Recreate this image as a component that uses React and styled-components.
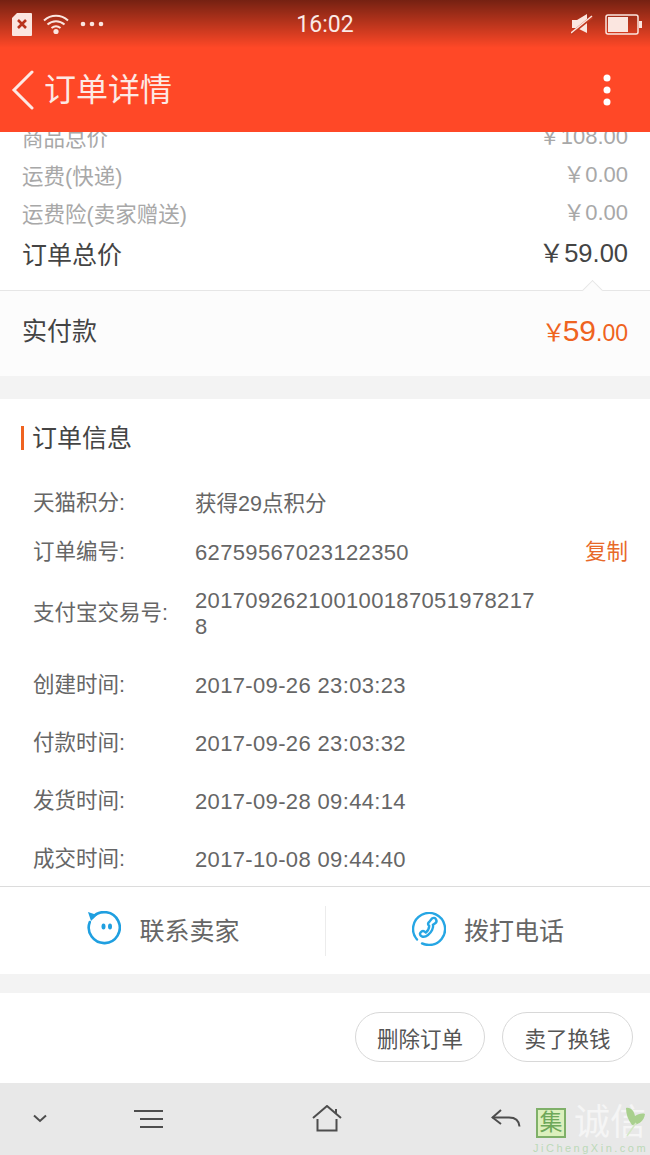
import styled, { createGlobalStyle } from "styled-components"

const GlobalStyle = createGlobalStyle`
    html, body {
        margin: 0;
        padding: 0;
        background: #fff;
    }
    * {
        box-sizing: border-box;
    }
`

const FONT = `"Liberation Sans", "Noto Sans CJK SC", sans-serif`

const Page = styled.div`
    width: 650px;
    height: 1155px;
    display: flex;
    flex-direction: column;
    overflow: hidden;
    font-family: ${FONT};
    background: #f3f3f3;
`

const Header = styled.header`
    height: 132px;
    flex: none;
    background: #ff4827;
    position: relative;
    display: flex;
    flex-direction: column;
    color: #fff;
    z-index: 1;
`

const StatusShade = styled.div`
    position: absolute;
    top: 0;
    left: 0;
    right: 0;
    height: 48px;
    background: linear-gradient(rgba(0, 0, 0, 0.54), rgba(0, 0, 0, 0));
`

const StatusBar = styled.div`
    position: relative;
    height: 48px;
    display: grid;
    grid-template-columns: 1fr auto 1fr;
    align-items: center;
    padding: 0 8px;
`

const StatusLeft = styled.div`
    display: flex;
    align-items: center;
    gap: 11px;
    padding-left: 4px;
`

const StatusRight = styled.div`
    display: flex;
    align-items: center;
    justify-content: flex-end;
    gap: 12px;
`

const Clock = styled.span`
    font-family: Roboto, ${FONT};
    font-size: 23px;
    color: #fbeae6;
`

const TitleBar = styled.div`
    flex: 1;
    display: flex;
    align-items: center;
    padding: 0 39px 0 11px;
    gap: 9px;
`

const Title = styled.h1`
    flex: 1;
    margin: 0;
    font-size: 32px;
    font-weight: 400;
    color: #fde9e4;
    line-height: 1;
`

const Content = styled.main`
    flex: 1;
    display: flex;
    flex-direction: column;
    overflow: hidden;
`

const PriceList = styled.section`
    margin-top: -25px;
    height: 183px;
    background: #fff;
    padding: 10px 22px 0;
    flex: none;
`

const PriceRow = styled.div`
    height: 38px;
    display: flex;
    justify-content: space-between;
    align-items: center;
    font-size: 21.5px;
    color: #a8a8a8;
`

const PriceValue = styled.span`
    font-size: 22px;
    padding-bottom: 4px;
`

const TotalRow = styled(PriceRow)`
    height: 44px;
    font-size: 25px;
    color: #444;
`

const TotalValue = styled.span`
    font-size: 25.5px;
    padding-bottom: 5px;
`

const PaySection = styled.section`
    position: relative;
    height: 86px;
    flex: none;
    background: #fcfcfc;
    border-top: 1px solid #e6e6e6;
    display: flex;
    justify-content: space-between;
    align-items: center;
    padding: 0 22px 10px;
    font-size: 25px;
    color: #444;
`

const Notch = styled.span`
    position: absolute;
    right: 50px;
    top: -8px;
    width: 15px;
    height: 15px;
    background: #fcfcfc;
    border-top: 1px solid #e6e6e6;
    border-left: 1px solid #e6e6e6;
    transform: rotate(45deg);
`

const PayAmount = styled.span`
    color: #ef6320;
    font-size: 23px;
    display: flex;
    align-items: baseline;
    padding-top: 4px;
`

const PayYen = styled.span`
    font-size: 24px;
    margin-right: -3px;
`

const PayBig = styled.b`
    font-weight: 400;
    font-size: 30px;
`

const Gap = styled.div`
    height: ${(p) => p.$h}px;
    flex: none;
`

const InfoSection = styled.section`
    height: 487px;
    flex: none;
    background: #fff;
    padding-top: 19px;
`

const SectionTitle = styled.h2`
    margin: 0 0 22px 21px;
    padding-left: 11px;
    height: 36px;
    display: flex;
    align-items: center;
    font-size: 25px;
    font-weight: 400;
    color: #444;
    position: relative;

    &::before {
        content: "";
        position: absolute;
        left: 0;
        top: 8px;
        width: 3px;
        height: 24px;
        background: #ef6320;
    }
`

const InfoRow = styled.div`
    height: ${(p) => p.$h}px;
    margin-bottom: ${(p) => p.$after || 0}px;
    display: grid;
    grid-template-columns: 162px 345px 1fr;
    align-items: center;
    padding: 0 22px 0 33px;
    font-size: 21.5px;
    color: #666;
`

const InfoValue = styled.span`
    font-size: ${(p) => (p.$text ? 21.5 : 22)}px;
    line-height: 26px;
    padding-top: 7px;
    word-break: break-all;
    letter-spacing: ${(p) => (p.$text ? 0 : 0.35)}px;
`

const CopyLink = styled.span`
    justify-self: end;
    color: #e8692a;
`

const ContactBar = styled.section`
    height: 88px;
    flex: none;
    background: #fff;
    border-top: 1px solid #dcdcdc;
    display: grid;
    grid-template-columns: 1fr 1fr;
    align-items: center;
`

const ContactButton = styled.div`
    height: 50px;
    display: flex;
    align-items: center;
    justify-content: center;
    gap: 18px;
    font-size: 25px;
    color: #666;
    padding-bottom: 3px;
    border-left: ${(p) => (p.$divided ? "1px solid #ececec" : "none")};
`

const ActionBar = styled.section`
    height: 90px;
    flex: none;
    background: #fff;
    display: flex;
    justify-content: flex-end;
    align-items: center;
    gap: 17px;
    padding: 0 17px 2px 0;
`

const PillButton = styled.div`
    width: ${(p) => p.$w}px;
    height: 50px;
    border: 1px solid #d8d8d8;
    border-radius: 25px;
    display: flex;
    align-items: center;
    justify-content: center;
    font-size: 21.5px;
    color: #555;
`

const NavBar = styled.nav`
    height: 72px;
    flex: none;
    background: #e8e8e8;
    position: relative;
    display: grid;
    grid-template-columns: 80px 138px 218px 140px;
    align-items: center;
    padding-bottom: 1px;
`

const NavSlot = styled.div`
    display: flex;
    justify-content: center;
`

const Watermark = styled.div`
    position: absolute;
    left: 533px;
    top: 23px;
    width: 117px;
    display: flex;
    flex-direction: column;
`

const MarkRow = styled.div`
    display: flex;
    align-items: center;
    gap: 8px;
    position: relative;
`

const MarkBox = styled.span`
    width: 30px;
    height: 30px;
    margin-left: 3px;
    flex: none;
    background: #dcf0bd;
    border: 2px solid #7fb069;
    color: #6ea85a;
    font-size: 23px;
    line-height: 25px;
    text-align: center;
`

const MarkText = styled.span`
    font-size: 36px;
    line-height: 34px;
    color: #f5f5f5;
    white-space: nowrap;
`

const MarkLeaf = styled.svg`
    position: absolute;
    left: 90px;
    top: 0;
`

const MarkLatin = styled.span`
    font-size: 11px;
    letter-spacing: 2.5px;
    color: #bcd9b8;
    white-space: nowrap;
    margin-top: 2px;
`

const SimIcon = () => (
    <svg width="20" height="23" viewBox="0 0 20 23">
        <path d="M5 0h14a1 1 0 0 1 1 1v21a1 1 0 0 1-1 1H1a1 1 0 0 1-1-1V5z" fill="#fbe6e0" />
        <path d="M6 7l8 8M14 7l-8 8" stroke="#b8341c" strokeWidth="2.6" />
    </svg>
)

const WifiIcon = () => (
    <svg width="26" height="22" viewBox="0 0 26 22" fill="none" stroke="#fbe6e0" strokeWidth="2">
        <path d="M1 7.5C8 1.2 18 1.2 25 7.5" />
        <path d="M4.5 11.5c5-4.4 12-4.400 17 0" />
        <path d="M8.5 15c2.800-2.200 6.200-2.200 9 0" />
        <circle cx="13" cy="18.500" r="2.600" fill="#fbe6e0" stroke="none" />
    </svg>
)

const MoreDots = () => (
    <svg width="24" height="6" viewBox="0 0 24 6" fill="#fbe6e0">
        <circle cx="3" cy="3" r="2.300" />
        <circle cx="12" cy="3" r="2.300" />
        <circle cx="21" cy="3" r="2.300" />
    </svg>
)

const MuteIcon = () => (
    <svg width="22" height="22" viewBox="0 0 22 22" fill="none">
        <path d="M1 7h5l10-6v19L6 15H1z" fill="#fbe6e0" />
        <path d="M0 21L21 4" stroke="#c53c22" strokeWidth="3" />
        <path d="M0 20L21 3" stroke="#fbe6e0" strokeWidth="1.400" />
    </svg>
)

const BatteryIcon = () => (
    <svg width="37" height="21" viewBox="0 0 37 21">
        <rect x="1" y="1" width="32" height="19" rx="2" fill="none" stroke="#fbe6e0" strokeWidth="1.500" />
        <rect x="3" y="3" width="20" height="15" fill="#fbe6e0" />
        <rect x="34" y="7" width="3" height="7" fill="#fbe6e0" />
    </svg>
)

const BackIcon = () => (
    <svg width="24" height="40" viewBox="0 0 24 40" fill="none" stroke="#fde9e4" strokeWidth="3" strokeLinecap="round">
        <path d="M21 2L3 20l18 18" />
    </svg>
)

const KebabIcon = () => (
    <svg width="8" height="32" viewBox="0 0 8 32" fill="#fff">
        <circle cx="4" cy="4" r="3.500" />
        <circle cx="4" cy="16" r="3.500" />
        <circle cx="4" cy="28" r="3.500" />
    </svg>
)

const ChatIcon = () => (
    <svg width="36" height="36" viewBox="-1 0 36 36" fill="none" stroke="#1f9fe0" strokeWidth="2.600">
        <path d="M6.500 6.500A15.500 15.500 0 1 1 3.800 11" strokeLinecap="round" />
        <path d="M2 1l9 3-6 6z" fill="#1f9fe0" stroke="none" />
        <ellipse cx="17.500" cy="15.500" rx="2" ry="3" fill="#1f9fe0" stroke="none" />
        <ellipse cx="24" cy="15.500" rx="2" ry="3" fill="#1f9fe0" stroke="none" />
    </svg>
)

const PhoneIcon = () => (
    <svg width="34" height="34" viewBox="0 0 34 34" fill="none" stroke="#26a6e4" strokeWidth="2.400" strokeLinecap="round">
        <path d="M5 27.500A16 16 0 1 1 17 33a16 16 0 0 1-7-1.600" />
        <path d="M20 6.500c1.500-1 3-.8 4 .8 1 1.700.6 3-.8 4l-2.200 1.500c.8 3-1.500 7.500-5 10.200-2 1.600-4.200 2.300-6.200 1.400-1.500-.7-2.500-2.300-1.400-3.700 1-1.200 2.700-2 4-1.100l1.400.9c2-1.500 3.300-4.200 3.400-6.500l-.8-1c-.8-1.400 0-2.600 1.200-3.500z" />
    </svg>
)

const ChevronIcon = () => (
    <svg width="14" height="9" viewBox="0 0 14 9" fill="none" stroke="#4d4d4d" strokeWidth="2">
        <path d="M1 1.500l6 5.500 6-5.500" />
    </svg>
)

const MenuIcon = () => (
    <svg width="30" height="20" viewBox="0 0 30 20" fill="none" stroke="#4d4d4d" strokeWidth="2">
        <path d="M0 2h29M6 10h23M6 18h23" />
    </svg>
)

const HomeIcon = () => (
    <svg width="30" height="27" viewBox="0 0 30 27" fill="none" stroke="#4d4d4d" strokeWidth="2">
        <path d="M1 13L15 1l14 12" />
        <path d="M5.500 14v11.500h19V14" />
        <path d="M24 4v5" />
    </svg>
)

const ReturnIcon = () => (
    <svg width="30" height="20" viewBox="0 0 30 20" fill="none" stroke="#4d4d4d" strokeWidth="2">
        <path d="M10 1L1.500 8.500 10 15" />
        <path d="M1.500 8.500H18c6 0 10 3 10.500 9" />
    </svg>
)

const prices = [
    { label: "商品总价", value: "￥108.00" },
    { label: "运费(快递)", value: "￥0.00" },
    { label: "运费险(卖家赠送)", value: "￥0.00" },
]

const infos = [
    { label: "天猫积分:", value: "获得29点积分", h: 49, text: true },
    { label: "订单编号:", value: "62759567023122350", h: 49, copy: true },
    { label: "支付宝交易号:", value: "2017092621001001870519782178", h: 73, after: 6 },
    { label: "创建时间:", value: "2017-09-26 23:03:23", h: 58 },
    { label: "付款时间:", value: "2017-09-26 23:03:32", h: 58 },
    { label: "发货时间:", value: "2017-09-28 09:44:14", h: 58 },
    { label: "成交时间:", value: "2017-10-08 09:44:40", h: 58 },
]

const App = () => (
    <Page>
        <GlobalStyle />
        <Header>
            <StatusShade />
            <StatusBar>
                <StatusLeft>
                    <SimIcon />
                    <WifiIcon />
                    <MoreDots />
                </StatusLeft>
                <Clock>16:02</Clock>
                <StatusRight>
                    <MuteIcon />
                    <BatteryIcon />
                </StatusRight>
            </StatusBar>
            <TitleBar>
                <BackIcon />
                <Title>订单详情</Title>
                <KebabIcon />
            </TitleBar>
        </Header>
        <Content>
            <PriceList>
                {prices.map((p) => (
                    <PriceRow key={p.label}>
                        <span>{p.label}</span>
                        <PriceValue>{p.value}</PriceValue>
                    </PriceRow>
                ))}
                <TotalRow>
                    <span>订单总价</span>
                    <TotalValue>￥59.00</TotalValue>
                </TotalRow>
            </PriceList>
            <PaySection>
                <Notch />
                <span>实付款</span>
                <PayAmount>
                    <PayYen>￥</PayYen>
                    <PayBig>59</PayBig>.00
                </PayAmount>
            </PaySection>
            <Gap $h={23} />
            <InfoSection>
                <SectionTitle>订单信息</SectionTitle>
                {infos.map((i) => (
                    <InfoRow key={i.label} $h={i.h} $after={i.after}>
                        <span>{i.label}</span>
                        <InfoValue $text={i.text}>{i.value}</InfoValue>
                        {i.copy && <CopyLink>复制</CopyLink>}
                    </InfoRow>
                ))}
            </InfoSection>
            <ContactBar>
                <ContactButton>
                    <ChatIcon />
                    联系卖家
                </ContactButton>
                <ContactButton $divided>
                    <PhoneIcon />
                    拨打电话
                </ContactButton>
            </ContactBar>
            <Gap $h={19} />
            <ActionBar>
                <PillButton $w={130}>删除订单</PillButton>
                <PillButton $w={131}>卖了换钱</PillButton>
            </ActionBar>
            <NavBar>
                <NavSlot><ChevronIcon /></NavSlot>
                <NavSlot><MenuIcon /></NavSlot>
                <NavSlot><HomeIcon /></NavSlot>
                <NavSlot><ReturnIcon /></NavSlot>
                <Watermark>
                    <MarkRow>
                        <MarkBox>集</MarkBox>
                        <MarkText>诚信</MarkText>
                        <MarkLeaf width="24" height="32" viewBox="0 0 24 32">
                            <path d="M3 2c5-1 8 3 9 8 3-2 7-3 10-2-1 7-6 11-13 11C5 14 3 8 3 2z" fill="#a9d08e" />
                            <path d="M4 30L13 17" stroke="#d5e8c6" strokeWidth="1.500" fill="none" />
                        </MarkLeaf>
                    </MarkRow>
                    <MarkLatin>JiChengXin.com</MarkLatin>
                </Watermark>
            </NavBar>
        </Content>
    </Page>
)

export default App
